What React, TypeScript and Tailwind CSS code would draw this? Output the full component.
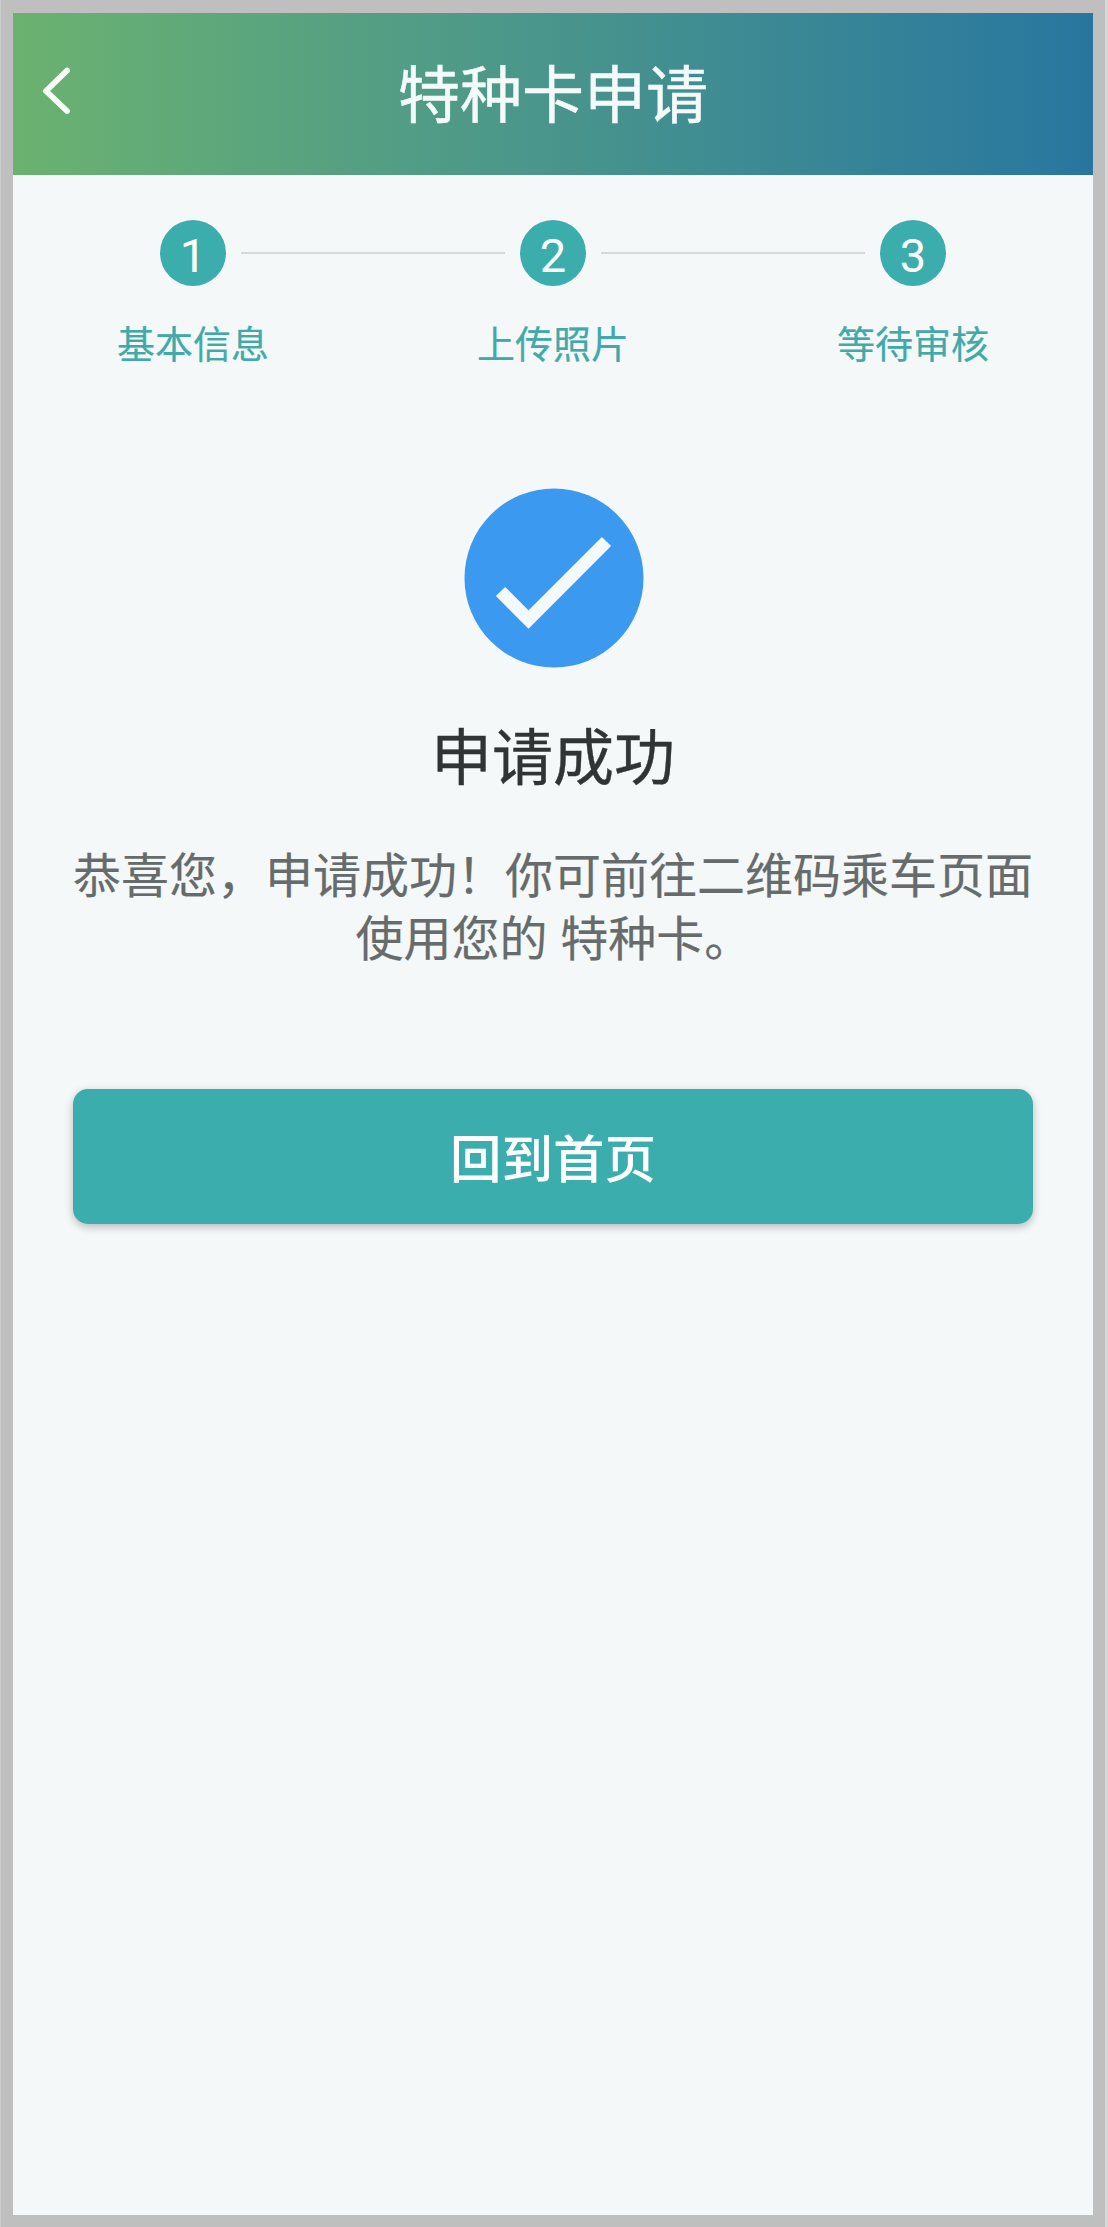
const steps = ['基本信息', '上传照片', '等待审核'];

function Header() {
  return (
    <header className="relative flex h-[162px] items-center justify-center bg-linear-to-r from-[#6bb26f] to-[#28769f]">
      <button aria-label="返回" className="absolute top-[54px] left-[29px]">
        <svg width="30" height="48" viewBox="0 0 30 48" fill="none">
          <path d="M25 3.5 4 24 25 44" stroke="#fafffc" strokeWidth="5.8" strokeLinecap="round" strokeLinejoin="round" />
        </svg>
      </button>
      <h1 className="pb-[6px] text-[62px] leading-none text-[#f4fafa] [-webkit-text-stroke:0.5px_#f4fafa]">特种卡申请</h1>
    </header>
  );
}

function Stepper() {
  return (
    <ol className="flex pt-[45px]">
      {steps.map((label, i) => (
        <li key={label} className="flex w-[360px] flex-col items-center">
          <div className="flex w-full items-center justify-between">
            <span className={i > 0 ? 'h-0.5 w-[132px] bg-[#d6dadb]' : 'w-[132px]'} />
            <span className="flex size-[66px] items-center justify-center rounded-full bg-[#3cadad] pt-[5px] font-[Roboto] text-[47px] leading-none text-white">
              {i + 1}
            </span>
            <span className={i < 2 ? 'h-0.5 w-[132px] bg-[#d6dadb]' : 'w-[132px]'} />
          </div>
          <span className="mt-[37px] text-[38px] leading-none text-[#41aaa9] [-webkit-text-stroke:0.2px_#41aaa9]">{label}</span>
        </li>
      ))}
    </ol>
  );
}

export default function App() {
  return (
    <div className="h-[2227px] w-[1108px] border-r-[3px] border-l border-r-[#d8d8d8] border-l-[#cdcdcd] bg-[#bfbfbf] pt-[13px] pl-3 font-['Noto_Sans_CJK_SC',sans-serif]">
      <main className="h-[2202px] w-[1080px] bg-[#f4f8f9]">
        <Header />
        <Stepper />
        <section className="flex flex-col items-center px-[60px] pt-[127px]">
          <svg className="ml-px" width="180" height="180" viewBox="0 0 180 180" fill="none">
            <circle cx="90" cy="90" r="89.5" fill="#3b99ef" />
            <path d="M36.500 103.500 64.500 131.500 142.500 53.500" stroke="#f4f9fc" strokeWidth="13" />
          </svg>
          <h2 className="mt-[55px] text-[61px] leading-none text-[#2f3435] [-webkit-text-stroke:0.4px_#2f3435]">申请成功</h2>
          <p className="mt-[57px] w-[962px] shrink-0 text-center text-[48px] leading-[63px] text-[#666b6b] [-webkit-text-stroke:0.2px_#666b6b]">
            恭喜您，申请成功！你可前往二维码乘车页面
            <br />
            <span className="ml-0.5 [word-spacing:2px]">使用您的 特种卡。</span>
          </p>
          <button className="mt-[122px] flex h-[135px] w-full items-center justify-center rounded-[15px] bg-[#3cadad] pb-0.5 text-[51.5px] leading-none font-medium text-white shadow-[0_3px_8px_rgba(0,0,0,0.25)]">
            回到首页
          </button>
        </section>
      </main>
    </div>
  );
}
